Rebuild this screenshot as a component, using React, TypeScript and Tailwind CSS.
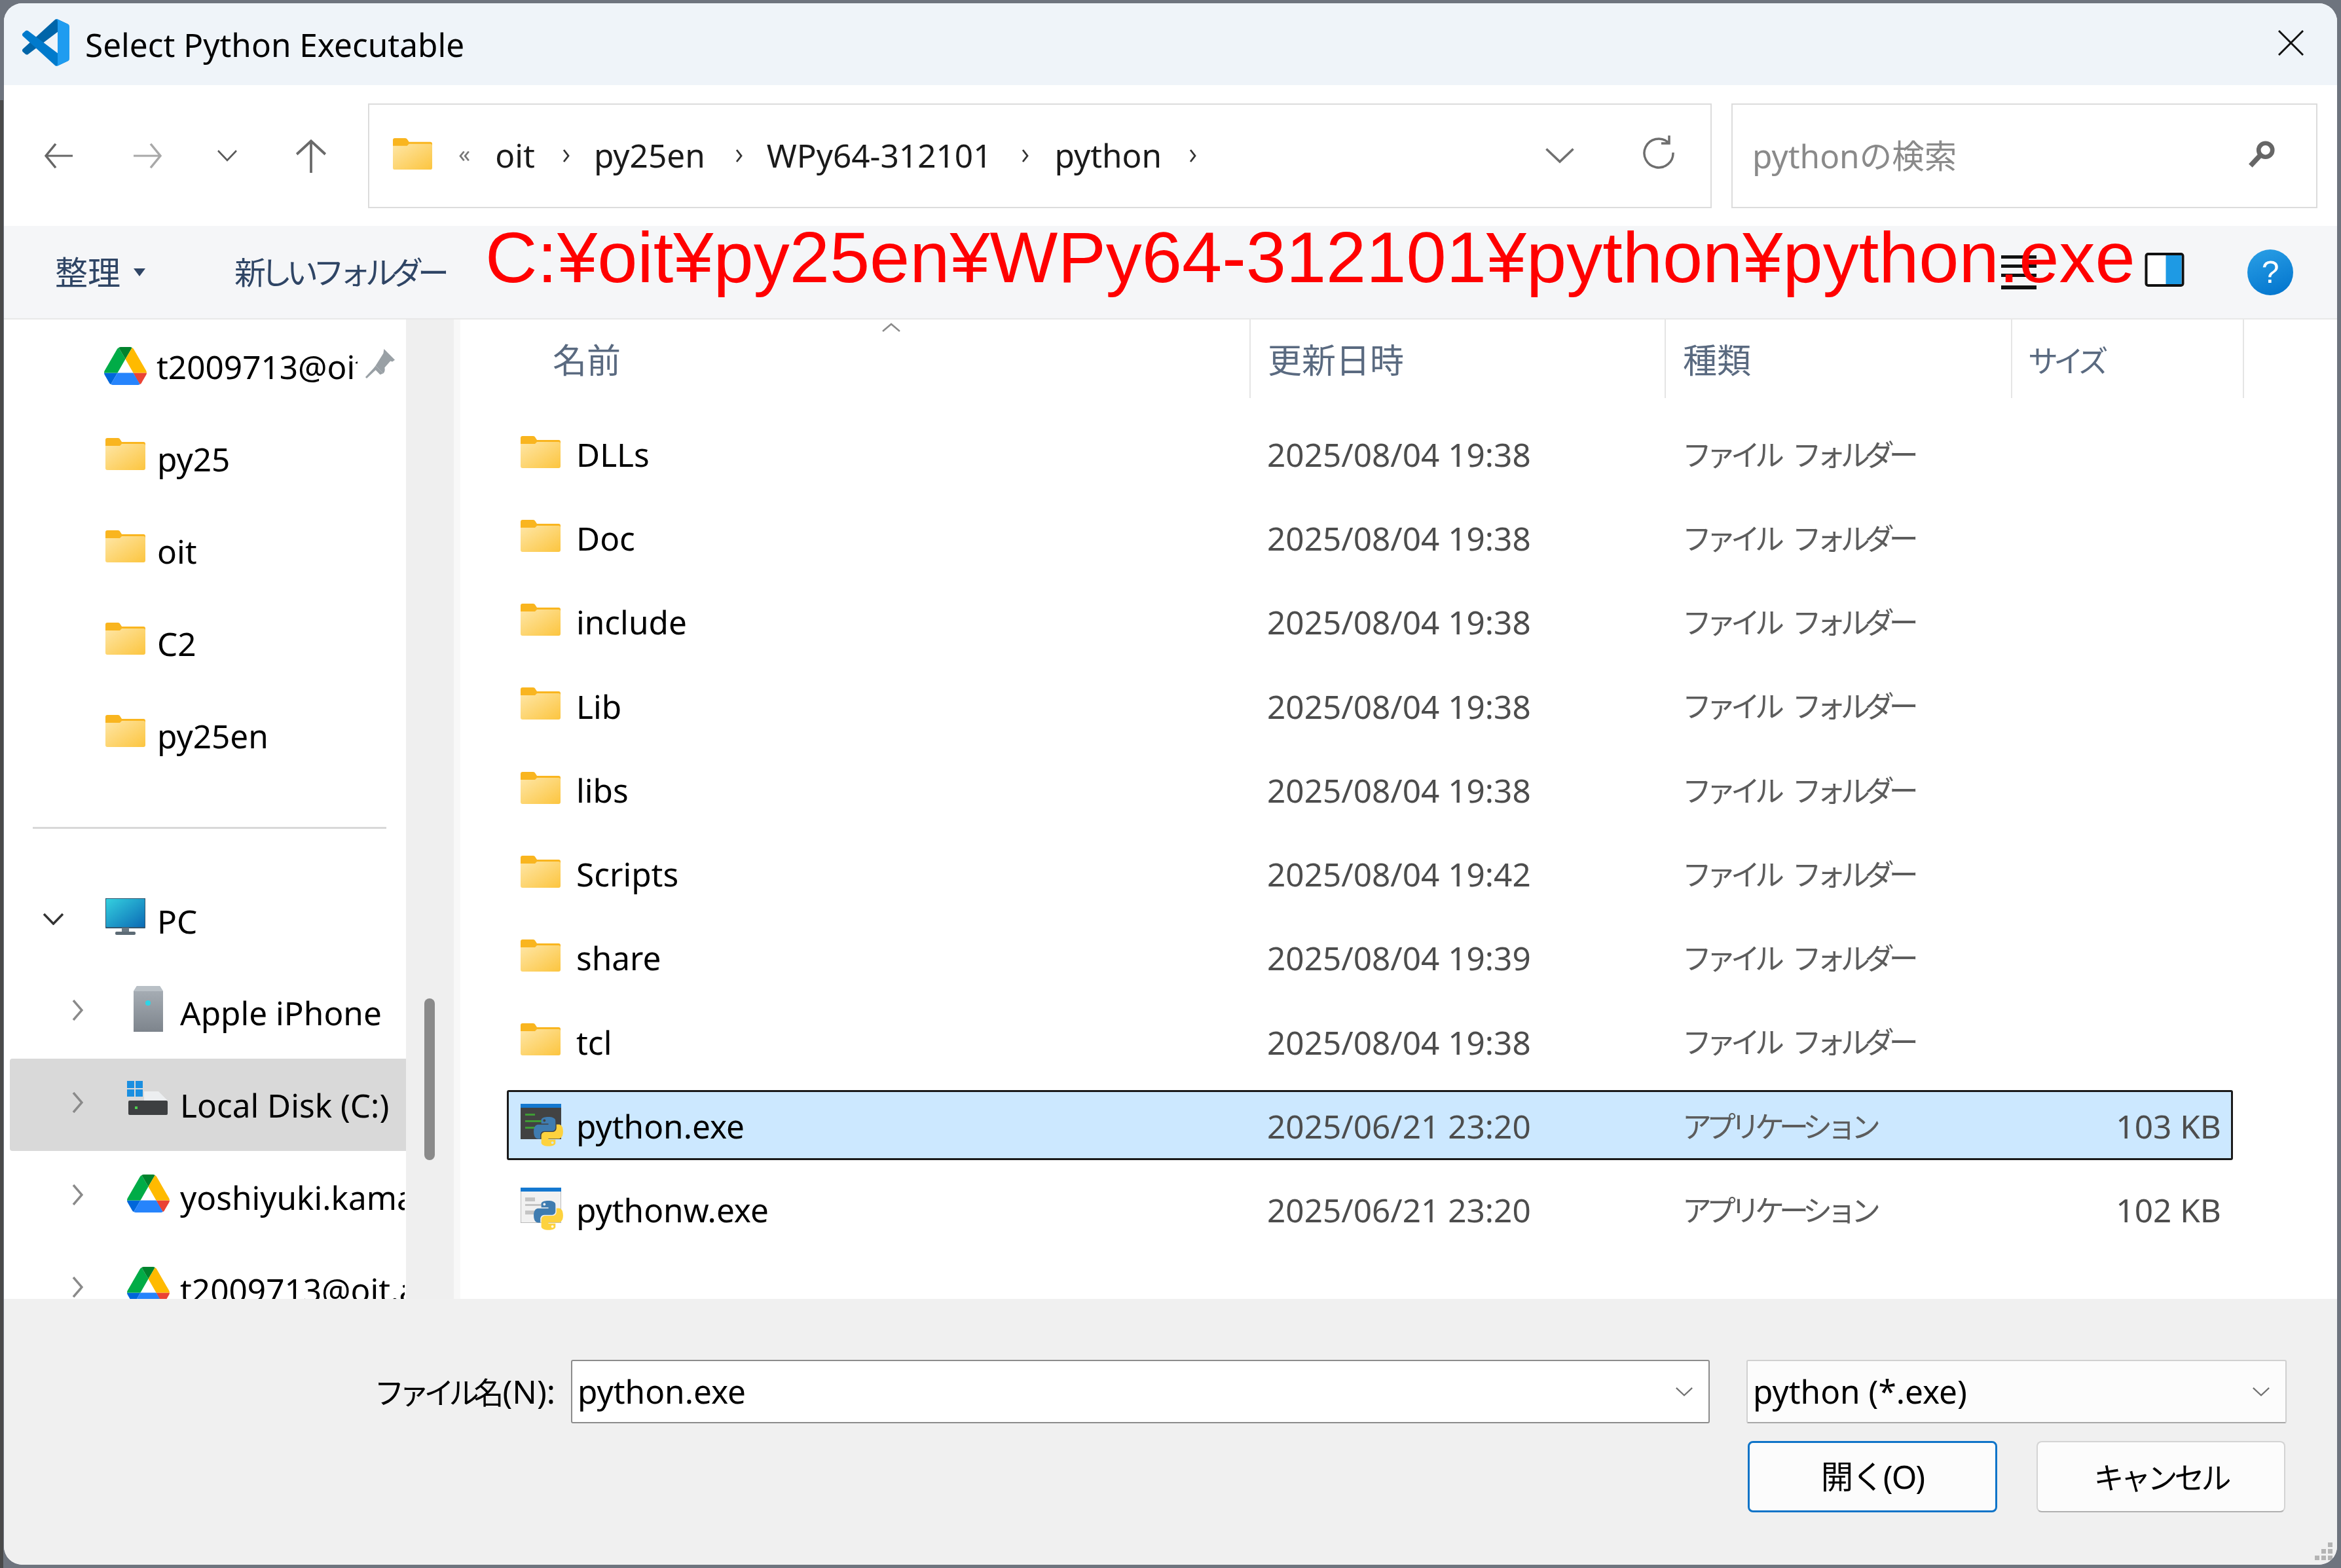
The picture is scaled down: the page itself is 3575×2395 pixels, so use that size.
import React from "react";

const Folder = ({ className = "" }: { className?: string }) => (
  <svg viewBox="0 0 61 49" className={`shrink-0 ${className}`}>
    <defs>
      <linearGradient id="fg" x1="0" y1="0" x2="1" y2="1">
        <stop offset="0" stopColor="#fee6a6" />
        <stop offset="1" stopColor="#fcc53f" />
      </linearGradient>
    </defs>
    <path d="M0 3a3 3 0 0 1 3-3h16c2 0 3 1 4 3l2 3h33a3 3 0 0 1 3 3v6H0z" fill="#f9b51f" />
    <path d="M0 12h22l3-3h33a3 3 0 0 1 3 3v34a3 3 0 0 1-3 3H3a3 3 0 0 1-3-3z" fill="url(#fg)" />
  </svg>
);

const Drive = ({ className = "" }: { className?: string }) => (
  <svg viewBox="0 0 87.3 78" className={`shrink-0 ${className}`} preserveAspectRatio="none">
    <path d="m6.6 66.85 3.85 6.65c.8 1.4 1.95 2.5 3.3 3.3l13.75-23.8h-27.5c0 1.55.4 3.1 1.2 4.5z" fill="#0066da" />
    <path d="m43.65 25-13.75-23.8c-1.35.8-2.5 1.9-3.3 3.3l-25.4 44a9.06 9.06 0 0 0 -1.2 4.5h27.5z" fill="#00ac47" />
    <path d="m73.55 76.8c1.35-.8 2.5-1.9 3.3-3.3l1.6-2.75 7.65-13.25c.8-1.4 1.2-2.95 1.2-4.5h-27.502l5.852 11.5z" fill="#ea4335" />
    <path d="m43.65 25 13.75-23.8c-1.35-.8-2.9-1.2-4.5-1.2h-18.5c-1.6 0-3.15.45-4.5 1.2z" fill="#00832d" />
    <path d="m59.8 53h-32.3l-13.75 23.8c1.35.8 2.9 1.2 4.5 1.2h50.8c1.6 0 3.15-.45 4.5-1.2z" fill="#2684fc" />
    <path d="m73.4 26.5-12.7-22c-.8-1.4-1.95-2.5-3.3-3.3l-13.75 23.8 16.15 28h27.45c0-1.55-.4-3.1-1.2-4.5z" fill="#ffba00" />
  </svg>
);

const PythonMark = ({ className = "" }: { className?: string }) => (
  <svg viewBox="0 0 256 255" className={className}>
    <path fill="#3f7cb0" d="M126.916.072c-64.832 0-60.784 28.115-60.784 28.115l.072 29.128h61.868v8.745H41.631S.145 61.355.145 126.77c0 65.417 36.21 63.097 36.21 63.097h21.61v-30.356s-1.165-36.21 35.632-36.21h61.362s34.475.557 34.475-33.319V33.97S194.67.072 126.916.072zM92.802 19.66a11.12 11.12 0 0 1 11.13 11.13 11.12 11.12 0 0 1-11.13 11.13 11.12 11.12 0 0 1-11.13-11.13 11.12 11.12 0 0 1 11.13-11.13z" />
    <path fill="#fdd23e" d="M128.757 254.126c64.832 0 60.784-28.115 60.784-28.115l-.072-29.127H127.6v-8.745h86.441s41.486 4.705 41.486-60.712c0-65.416-36.21-63.096-36.21-63.096h-21.61v30.355s1.165 36.21-35.632 36.21h-61.362s-34.475-.557-34.475 33.32v56.013s-5.235 33.897 62.518 33.897zm34.114-19.586a11.12 11.12 0 0 1-11.13-11.13 11.12 11.12 0 0 1 11.13-11.131 11.12 11.12 0 0 1 11.13 11.13 11.12 11.12 0 0 1-11.13 11.13z" />
  </svg>
);

const PyExe = ({ dark }: { dark: boolean }) => (
  <div className="relative w-[65px] h-[66px] shrink-0">
    <svg viewBox="0 0 62 54" className="absolute left-0 top-0 w-[62px] h-[54px]">
      <rect x="0" y="0" width="62" height="54" fill={dark ? "#424242" : "#f1f1f1"} stroke={dark ? "none" : "#a9a9a9"} strokeWidth="1.5" />
      <rect x="0" y="0" width="62" height="6" fill="#1478d0" />
      {dark ? (
        <g fill="#3f9c35">
          <rect x="7" y="15" width="15" height="3" />
          <rect x="7" y="25" width="26" height="3" />
          <rect x="7" y="35" width="16" height="3" />
        </g>
      ) : (
        <g fill="#c4c4c4">
          <rect x="7" y="15" width="15" height="6" />
          <rect x="7" y="25" width="26" height="3" />
          <rect x="7" y="35" width="16" height="6" />
        </g>
      )}
    </svg>
    <PythonMark className="absolute left-[20px] top-[19px] w-[45px] h-[47px]" />
  </div>
);

const ChevronRight = () => (
  <svg viewBox="0 0 17 32" preserveAspectRatio="none" className="w-[17px] h-[32px] shrink-0 ml-[104px] -mt-[8px]" fill="none" stroke="#8a8a8a" strokeWidth="3.5">
    <path d="M2 1l13 15L2 31" />
  </svg>
);

const Arrow = ({ color, dir, className = "" }: { color: string; dir: "l" | "r" | "u"; className?: string }) => (
  <svg viewBox="0 0 44 44" preserveAspectRatio="none" className={`shrink-0 ${className}`} fill="none" stroke={color} strokeWidth="3.5">
    {dir === "l" && <path d="M44 22H3M18 2L3 22l15 20" />}
    {dir === "r" && <path d="M0 22h41M26 2l15 20-15 20" />}
    {dir === "u" && <path d="M22 44V3M2 20L22 3l20 17" />}
  </svg>
);

const Crumb = () => (
  <svg viewBox="0 0 12 22" className="w-[12px] h-[22px] shrink-0" fill="none" stroke="#333" strokeWidth="2.8">
    <path d="M2 2l7 9-7 9" />
  </svg>
);

const DownV = ({ className = "", color = "#707070" }: { className?: string; color?: string }) => (
  <svg viewBox="0 0 30 16" preserveAspectRatio="none" className={`shrink-0 ${className}`} fill="none" stroke={color} strokeWidth="2.5">
    <path d="M1 1l14 13L29 1" />
  </svg>
);

const SideRow = ({ children, extra = "" }: { children: React.ReactNode; extra?: string }) => (
  <div className={`h-[141px] flex items-center text-[#000] ${extra}`}>{children}</div>
);

const rows: [string, string][] = [
  ["DLLs", "2025/08/04 19:38"],
  ["Doc", "2025/08/04 19:38"],
  ["include", "2025/08/04 19:38"],
  ["Lib", "2025/08/04 19:38"],
  ["libs", "2025/08/04 19:38"],
  ["Scripts", "2025/08/04 19:42"],
  ["share", "2025/08/04 19:39"],
  ["tcl", "2025/08/04 19:38"],
];

const cols = "grid grid-cols-[1158px_634px_520px_1fr] items-center";

const FileRow = ({ icon, name, date, type, size, selected = false }: { icon: React.ReactNode; name: string; date: string; type: string; size?: string; selected?: boolean }) => (
  <div className={`${cols} h-[107px] mb-[21.25px] box-border ${selected ? "border-[3px] border-[#1a1a1a] rounded-[3px] bg-[#cce8ff]" : "border-[3px] border-transparent"}`}>
    <div className="flex items-center pl-[18px] gap-[20px] text-black h-full">
      <div className="w-[65px] flex items-center">{icon}</div>
      <span className="pt-[4px]">{name}</span>
    </div>
    <span className="text-[#4d4d4d] pt-[4px]">{date}</span>
    <span className="text-[#5c5c5c] text-[45px] tracking-[-8px] [word-spacing:16px] pt-[3px]">{type}</span>
    <span className="text-[#4d4d4d] text-right pr-[15px] pt-[4px]">{size}</span>
  </div>
);

export default function App() {
  return (
    <div className="relative w-[3575px] h-[2395px] bg-[#6e747e] pt-[5px] pb-[5px] pl-[6px] pr-[6px] overflow-hidden font-['Noto_Sans','Noto_Sans_CJK_JP',sans-serif] text-[49.5px] leading-none blur-[0.6px]">
      <div className="h-full flex flex-col bg-white rounded-[28px] overflow-hidden">
        {/* title bar */}
        <div className="h-[125px] shrink-0 bg-[#eff4f9] flex items-center pl-[28px] pr-[51px]">
          <svg viewBox="0 0 100 100" className="w-[72px] h-[72px] shrink-0 -mt-[5px]">
            <path fill="#0065a9" d="M96.4614 10.7962L75.8569 0.875542C73.4719 -0.272773 70.6217 0.211611 68.75 2.08333L1.29858 63.5832C-0.515693 65.2373 -0.513607 68.0937 1.30308 69.7452L6.81272 74.754C8.29793 76.1042 10.5347 76.2036 12.1338 74.9905L93.3609 13.3699C96.086 11.3026 100 13.2462 100 16.6667V16.4275C100 14.0265 98.6246 11.8378 96.4614 10.7962Z" />
            <path fill="#007acc" d="M96.4614 89.2038L75.8569 99.1245C73.4719 100.273 70.6217 99.7884 68.75 97.9167L1.29858 36.4168C-0.515693 34.7627 -0.513607 31.9063 1.30308 30.2548L6.81272 25.246C8.29793 23.8958 10.5347 23.7964 12.1338 25.0095L93.3609 86.6301C96.086 88.6974 100 86.7538 100 83.3333V83.5725C100 85.9735 98.6246 88.1622 96.4614 89.2038Z" />
            <path fill="#1f9cf0" d="M75.8578 99.1263C73.4721 100.274 70.622 99.7885 68.75 97.9166C71.0564 100.223 75 98.5895 75 95.3278V4.67213C75 1.41039 71.0564 -0.223106 68.75 2.08329C70.622 0.211402 73.4721 -0.273666 75.8578 0.873633L96.4587 10.7807C98.6234 11.8217 100 14.0112 100 16.4132V83.5871C100 85.9891 98.6234 88.1786 96.4586 89.2196L75.8578 99.1263Z" />
          </svg>
          <span className="ml-[24px] text-black pt-[3px]">Select Python Executable</span>
          <svg viewBox="0 0 40 40" className="w-[39px] h-[39px] ml-auto -mt-[5px]" fill="none" stroke="#111" strokeWidth="3">
            <path d="M1 1l38 38M39 1L1 39" />
          </svg>
        </div>

        {/* nav bar */}
        <div className="h-[215px] shrink-0 bg-white flex items-center pl-[61px] pr-[29px]">
          <Arrow color="#666" dir="l" className="w-[44px] h-[40px]" />
          <Arrow color="#a8a8a8" dir="r" className="w-[44px] h-[40px] ml-[93px]" />
          <DownV color="#5a5a5a" className="w-[30px] h-[18px] ml-[84px]" />
          <Arrow color="#6a6a6a" dir="u" className="w-[48px] h-[52px] ml-[89px]" />
          <div className="h-[160px] w-[2052px] ml-[63px] border-2 border-[#dcdcdc] flex items-center pl-[36px] pr-[55px] text-[#1a1a1a]">
            <Folder className="w-[60px] h-[50px] -mt-[6px]" />
            <span className="ml-[40px] text-[#777] text-[36px] -mt-[6px]">«</span>
            <span className="ml-[38px]">oit</span>
            <span className="ml-[42px]"><Crumb /></span>
            <span className="ml-[36px]">py25en</span>
            <span className="ml-[46px]"><Crumb /></span>
            <span className="ml-[36px]">WPy64-312101</span>
            <span className="ml-[46px]"><Crumb /></span>
            <span className="ml-[38px]">python</span>
            <span className="ml-[42px]"><Crumb /></span>
            <DownV className="w-[44px] h-[24px] ml-auto" />
            <svg viewBox="0 0 48 56" className="w-[48px] h-[56px] ml-[105px] -mt-[10px]" fill="none" stroke="#6e6e6e" strokeWidth="3.5">
              <path d="M38 12A22 22 0 1 0 46 28M40 2v12H28" />
            </svg>
          </div>
          <div className="h-[160px] w-[895px] ml-[30px] border-2 border-[#dcdcdc] flex items-center pl-[30px] pr-[62px] text-[#8a8a8a]">
            <span className="pt-[3px]">pythonの検索</span>
            <svg viewBox="0 0 44 44" className="w-[42px] h-[42px] ml-auto -mt-[6px]" fill="none" stroke="#666" strokeWidth="7">
              <circle cx="28" cy="16" r="11" />
              <path d="M20 24L4 41" strokeWidth="8" />
            </svg>
          </div>
        </div>

        {/* command bar */}
        <div className="h-[143px] shrink-0 bg-[#f5f6f8] border-b-2 border-[#e8e8e8] flex items-center pl-[78px] pr-[67px] text-[#2f4565] text-[50px]">
          <span>整理</span>
          <svg viewBox="0 0 18 12" className="w-[18px] h-[12px] ml-[20px]" fill="#2f4565"><path d="M0 0h18L9 12z" /></svg>
          <span className="ml-[136px] text-[48px] tracking-[-8px]">新しいフォルダー</span>
          <svg viewBox="0 0 54 52" className="w-[54px] h-[52px] ml-auto" fill="#111">
            <rect x="0" y="0" width="54" height="5" /><rect x="0" y="14" width="54" height="5" /><rect x="0" y="28" width="54" height="5" /><rect x="0" y="46" width="54" height="6" />
          </svg>
          <svg viewBox="0 0 60 52" className="w-[61px] h-[52px] ml-[165px] -mt-[8px]">
            <rect x="2" y="2" width="56" height="48" rx="3" fill="#fff" stroke="#111" strokeWidth="4" />
            <rect x="32" y="4" width="24" height="44" fill="#1e9ae4" />
          </svg>
          <div className="w-[70px] h-[70px] ml-[96px] rounded-full bg-[linear-gradient(160deg,#2ba0e6,#0072cc)] flex items-center justify-center text-white text-[48px] font-['Liberation_Sans',sans-serif]">?</div>
        </div>

        {/* content */}
        <div className="flex-1 min-h-0 flex bg-white">
          <div className="w-[614px] shrink-0 overflow-hidden">
            <SideRow>
              <Drive className="w-[65px] h-[58px] ml-[153px]" />
              <span className="ml-[15px] w-[307px] overflow-hidden whitespace-nowrap leading-[1.3] pt-[3px]">t2009713@oit</span>
              <svg viewBox="0 0 48 48" className="w-[47px] h-[47px] ml-[11px] -mt-[6px]" fill="#99a0a5">
                <path d="M30 1l17 17-4 3-3-1-9 10c1 4 0 7-2 9L17 27 29 8z" />
                <path d="M17 27l12 12-5 2-7-7L3 47l-2-2 13-14z" />
              </svg>
            </SideRow>
            {["py25", "oit", "C2", "py25en"].map((n) => (
              <SideRow key={n}>
                <Folder className="w-[61px] h-[49px] ml-[155px] -mt-[12px]" />
                <span className="ml-[18px] pt-[4px]">{n}</span>
              </SideRow>
            ))}
            <div className="h-[143px] flex items-center pl-[44px] pr-[30px]">
              <div className="h-[3px] w-full bg-[#d8d8d8]" />
            </div>
            <SideRow>
              <svg viewBox="0 0 31 18" preserveAspectRatio="none" className="w-[31px] h-[18px] shrink-0 ml-[60px] -mt-[6px]" fill="none" stroke="#333" strokeWidth="3.5">
                <path d="M1 1l14.5 15L30 1" />
              </svg>
              <svg viewBox="0 0 61 56" className="w-[61px] h-[56px] ml-[64px] -mt-[14px]">
                <defs>
                  <linearGradient id="mon" x1="0" y1="0" x2="1" y2="1">
                    <stop offset="0" stopColor="#35d2e0" />
                    <stop offset="1" stopColor="#0a68b4" />
                  </linearGradient>
                </defs>
                <rect x="0" y="0" width="61" height="45" rx="2" fill="url(#mon)" stroke="#33566d" strokeWidth="2" />
                <rect x="25" y="45" width="11" height="7" fill="#6c7a84" />
                <rect x="15" y="51" width="31" height="5" rx="2" fill="#5d6b75" />
              </svg>
              <span className="ml-[18px] pt-[3px]">PC</span>
            </SideRow>
            <SideRow extra="-mt-px">
              <ChevronRight />
              <svg viewBox="0 0 45 70" className="w-[45px] h-[70px] ml-[77px] -mt-[12px]">
                <defs>
                  <linearGradient id="tow" x1="0" y1="0" x2="0" y2="1">
                    <stop offset="0" stopColor="#aab1b8" />
                    <stop offset="1" stopColor="#7d848c" />
                  </linearGradient>
                </defs>
                <path d="M5 0h35l5 8v62H0V8z" fill="url(#tow)" />
                <path d="M0 8l5-8h35l5 8z" fill="#b9c0c6" />
                <circle cx="22" cy="26" r="4" fill="#2fd4e6" />
              </svg>
              <span className="ml-[26px] whitespace-nowrap pt-[3px]">Apple iPhone</span>
            </SideRow>
            <div className="h-[141px] mx-[9px] -mr-[3px] bg-[#d9d9d9] rounded-[4px] flex items-center text-black">
              <svg viewBox="0 0 17 32" preserveAspectRatio="none" className="w-[17px] h-[32px] shrink-0 ml-[95px] -mt-[8px]" fill="none" stroke="#8a8a8a" strokeWidth="3.5">
                <path d="M2 1l13 15L2 31" />
              </svg>
              <svg viewBox="0 0 64 52" className="w-[64px] h-[52px] ml-[67px] -mt-[22px]">
                <g fill="#1a8fe0">
                  <rect x="0" y="0" width="11" height="11" /><rect x="13" y="0" width="11" height="11" /><rect x="0" y="13" width="11" height="11" /><rect x="13" y="13" width="11" height="11" />
                </g>
                <path d="M26 16h22l14 14H26z" fill="#eceef0" />
                <rect x="2" y="30" width="60" height="22" rx="2" fill="#3d3f41" />
                <rect x="12" y="39" width="4" height="4" fill="#4fd04f" />
              </svg>
              <span className="ml-[17px] whitespace-nowrap pt-[3px]">Local Disk (C:)</span>
            </div>
            <SideRow>
              <ChevronRight />
              <Drive className="w-[65px] h-[58px] ml-[67px] -mt-[12px]" />
              <span className="ml-[16px] w-[343px] overflow-hidden whitespace-nowrap leading-[1.4] pt-[3px]">yoshiyuki.kamada</span>
            </SideRow>
            <SideRow>
              <ChevronRight />
              <Drive className="w-[65px] h-[58px] ml-[67px] -mt-[12px]" />
              <span className="ml-[16px] w-[343px] overflow-hidden whitespace-nowrap leading-[1.4] pt-[3px]">t2009713@oit.ac.jp</span>
            </SideRow>
          </div>
          {/* scrollbar gutter */}
          <div className="w-[73px] shrink-0 bg-[#efefef] relative">
            <div className="absolute left-[28px] top-[1037px] w-[16px] h-[247px] rounded-full bg-[#8a8a8a]" />
          </div>
          <div className="w-[10px] shrink-0 bg-[#f8f8f8]" />
          {/* list */}
          <div className="flex-1 min-w-0 pl-[71px] pr-[159px]">
            <div className={`${cols} relative h-[151px] text-[#5a6a80] text-[52px] pb-[28px]`}>
              <span className="pl-[70px]">名前</span>
              <span className="pl-[4px]">更新日時</span>
              <span className="pl-[4px]">種類</span>
              <span className="pl-[11px] text-[46px] tracking-[-7px]">サイズ</span>
              <svg viewBox="0 0 30 14" className="absolute left-[572px] top-[5px] w-[30px] h-[14px]" fill="none" stroke="#8a8a8a" strokeWidth="2.5"><path d="M2 13L15 2l13 11" /></svg>
              <div className="absolute left-[1134px] top-0 w-[2px] h-[120px] bg-[#e5e5e5]" />
              <div className="absolute left-[1768px] top-0 w-[2px] h-[120px] bg-[#e5e5e5]" />
              <div className="absolute left-[2297px] top-0 w-[2px] h-[120px] bg-[#e5e5e5]" />
              <div className="absolute left-[2651px] top-0 w-[2px] h-[120px] bg-[#e5e5e5]" />
            </div>
            {rows.map(([n, d]) => (
              <FileRow key={n} icon={<Folder className="w-[61px] h-[49px] -mt-[5px]" />} name={n} date={d} type="ファイル フォルダー" />
            ))}
            <FileRow selected icon={<PyExe dark />} name="python.exe" date="2025/06/21 23:20" type="アプリケーション" size="103 KB" />
            <FileRow icon={<PyExe dark={false} />} name="pythonw.exe" date="2025/06/21 23:20" type="アプリケーション" size="102 KB" />
          </div>
        </div>

        {/* footer */}
        <div className="relative h-[406px] shrink-0 bg-[#f0f0f0] text-black">
          <div className="flex items-center mt-[93px] h-[97px]">
            <span className="w-[842px] text-right"><span className="text-[46px] tracking-[-8px]">ファイル名</span><span className="ml-[6px]">(N):</span></span>
            <div className="ml-[24px] w-[1739px] h-[97px] bg-white border-2 border-[#8c8c8c] rounded-[3px] flex items-center pl-[8px] pr-[24px]">
              <span>python.exe</span>
              <DownV className="w-[26px] h-[14px] ml-auto" />
            </div>
            <div className="ml-[56px] w-[825px] h-[97px] bg-[#fcfcfc] border-2 border-[#d0d0d0] border-b-[#a8a8a8] rounded-[3px] flex items-center pl-[8px] pr-[24px]">
              <span>python (*.exe)</span>
              <DownV className="w-[26px] h-[14px] ml-auto" />
            </div>
          </div>
          <div className="flex mt-[27px] pl-[2663px]">
            <div className="w-[381px] h-[109px] bg-[#fcfcfc] border-[3px] border-[#0f74c8] rounded-[8px] flex items-center justify-center tracking-[-2px]">開く(O)</div>
            <div className="ml-[60px] w-[380px] h-[109px] bg-[#fcfcfc] border-2 border-[#d4d4d4] border-b-[#b0b0b0] rounded-[8px] flex items-center justify-center text-[46px] tracking-[-5px]">キャンセル</div>
          </div>
          <svg viewBox="0 0 28 28" className="absolute right-[6px] bottom-[6px] w-[28px] h-[28px]" fill="#b4b4b4">
            <rect x="20" y="0" width="7" height="7" /><rect x="20" y="10" width="7" height="7" /><rect x="10" y="10" width="7" height="7" /><rect x="20" y="20" width="7" height="7" /><rect x="10" y="20" width="7" height="7" /><rect x="0" y="20" width="7" height="7" />
          </svg>
        </div>
      </div>

      {/* left edge shade of the desktop behind */}
      <div className="absolute left-0 top-[153px] bottom-0 w-[5px] bg-[#4a4a4a]" />

      {/* annotation lying over the dialog */}
      <div className="absolute left-[741px] top-[337px] text-[#ff0000] text-[110px] leading-[112px] whitespace-nowrap font-['Liberation_Sans',sans-serif]">
        C:¥oit¥py25en¥WPy64-312101¥python¥python.exe
      </div>
    </div>
  );
}
